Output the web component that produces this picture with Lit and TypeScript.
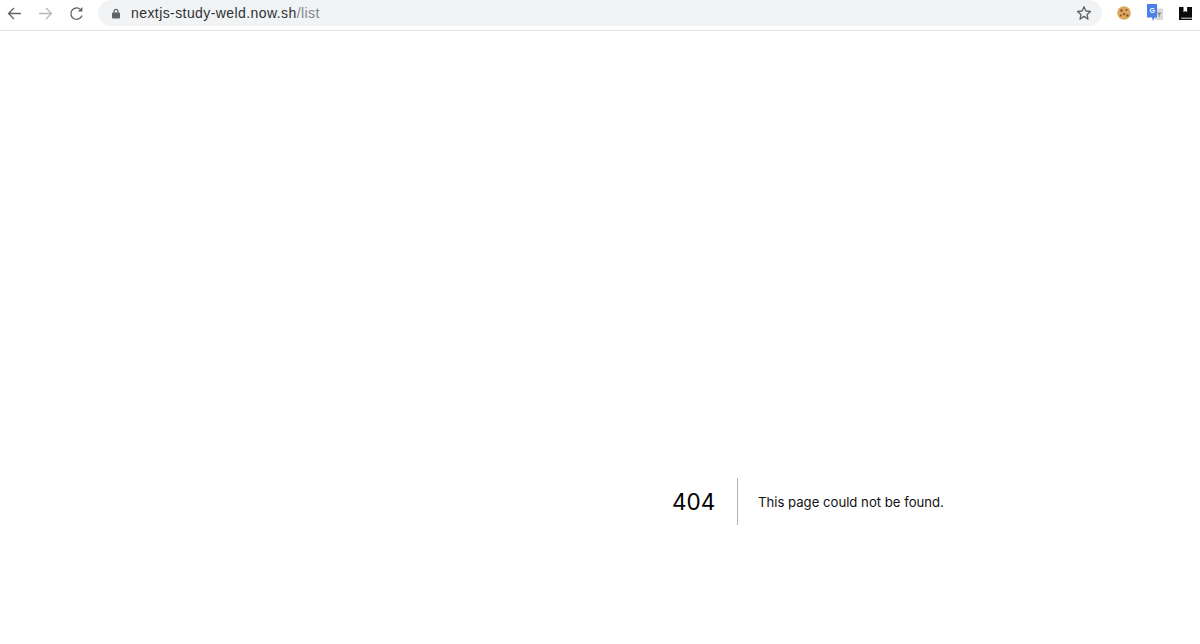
import { LitElement, html, css } from "lit";
import { customElement } from "lit/decorators.js";

@customElement("app-root")
export class AppRoot extends LitElement {
  static styles = css`
    :host { display: block; width: 1200px; height: 644px; background: #fff; font-family: Inter, "Liberation Sans", sans-serif; overflow: hidden; }
    .toolbar { height: 31px; box-sizing: border-box; border-bottom: 1px solid #dfe1e4; display: flex; align-items: flex-start; background: #fff; }
    .navs { display: flex; width: 98px; height: 26px; flex: none; padding-left: 7px; box-sizing: border-box; gap: 16px; align-items: center; }
    .navs svg { width: 15px; height: 15px; flex: none; }
    .omni { width: 1004px; height: 26px; flex: none; background: #f1f3f4; border-radius: 13px; display: flex; align-items: center; box-sizing: border-box; padding-left: 13px; }
    .lock { width: 10px; height: 11px; flex: none; }
    .url { margin-left: 10px; font-size: 14px; color: #303134; white-space: nowrap; font-family: "Liberation Sans", sans-serif; letter-spacing: 0.42px; }
    .url span { color: #80868b; }
    .star { margin-left: auto; margin-right: 10px; width: 16px; height: 16px; flex: none; }
    .ext { display: flex; flex: 1; height: 26px; padding-left: 15px; gap: 16px; align-items: center; }
    .cookie { width: 14px; height: 14px; flex: none; }
    .translate { width: 16px; height: 18px; flex: none; }
    .g { font: 700 7px "Liberation Sans", sans-serif; fill: #fff; }
    .book { width: 14px; height: 13px; flex: none; }
    .page { height: 613px; display: flex; }
    .err { margin: 447px 0 0 672px; display: flex; align-items: flex-start; height: 47px; color: #000; }
    .code { font-size: 22.5px; font-weight: 400; width: 66px; height: 47px; line-height: 47px; box-sizing: border-box; border-right: 1px solid rgba(0,0,0,.3); }
    .msg { font-size: 13.15px; padding-left: 20px; line-height: 48px; white-space: nowrap; color: #111; }
  `;
  render() {
    return html`
      <div class="toolbar">
        <div class="navs">
          <svg viewBox="0 0 15 15" fill="none" stroke="#5f6368" stroke-width="1.3"><path d="M14 7.5H1.5M7 2 1.5 7.5 7 13"/></svg>
          <svg viewBox="0 0 15 15" fill="none" stroke="#b4b7bb" stroke-width="1.3"><path d="M1 7.5H13.5M8 2l5.5 5.5L8 13"/></svg>
          <svg viewBox="0 0 15 15" fill="none" stroke="#5f6368" stroke-width="1.3"><path d="M13 9.5A5.7 5.7 0 1 1 11.6 3.6"/><path d="M13.4 1v4.6H8.8z" fill="#5f6368" stroke="none"/></svg>
        </div>
        <div class="omni">
          <svg class="lock" viewBox="0 0 10 11"><path d="M3 5V3.4a2 2 0 0 1 4 0V5" fill="none" stroke="#5f6368" stroke-width="1.2"/><rect x="1" y="4.5" width="8" height="6" rx="1" fill="#5f6368"/></svg>
          <div class="url">nextjs-study-weld.now.sh<span>/list</span></div>
          <svg class="star" viewBox="0 0 16 16" fill="none" stroke="#5f6368" stroke-width="1.3" stroke-linejoin="round"><path d="M8 1.8l1.9 4.2 4.6.5-3.4 3.1.9 4.5L8 11.4l-4 2.7.9-4.5L1.5 6.5l4.6-.5z"/></svg>
        </div>
        <div class="ext">
          <svg class="cookie" viewBox="0 0 14 14"><circle cx="7" cy="7" r="6.8" fill="#dca860"/><circle cx="4.5" cy="4.5" r="1.3" fill="#8a5526"/><circle cx="9.5" cy="4" r="1.1" fill="#8a5526"/><circle cx="7" cy="8" r="1.2" fill="#8a5526"/><circle cx="3.8" cy="9.5" r="1" fill="#8a5526"/><circle cx="10.4" cy="9.5" r="1.2" fill="#8a5526"/></svg>
          <svg class="translate" viewBox="0 0 16 18"><rect x="8" y="4.5" width="8" height="11.5" fill="#d8dadc"/><path d="M10 8.5h4.5l-1.7 2.4v2.4l-1.1-.8v-1.6z" fill="#8d9093"/><path d="M0 0H10V13.5H7.5L6 17 5 13.5H0z" fill="#4a80e8"/><text class="g" x="2.5" y="9.2">G</text></svg>
          <svg class="book" viewBox="0 0 14 13"><path d="M0 0H13V13H0z" fill="#0b0b0b"/><path d="M2.2 10.7H13v.9H2.2z" fill="#fff"/><path d="M4.5 0h3.6v5.2L6.3 3.9 4.5 5.2z" fill="#fff"/></svg>
        </div>
      </div>
      <div class="page">
        <div class="err">
          <div class="code">404</div>
          <div class="msg">This page could not be found.</div>
        </div>
      </div>
    `;
  }
}
